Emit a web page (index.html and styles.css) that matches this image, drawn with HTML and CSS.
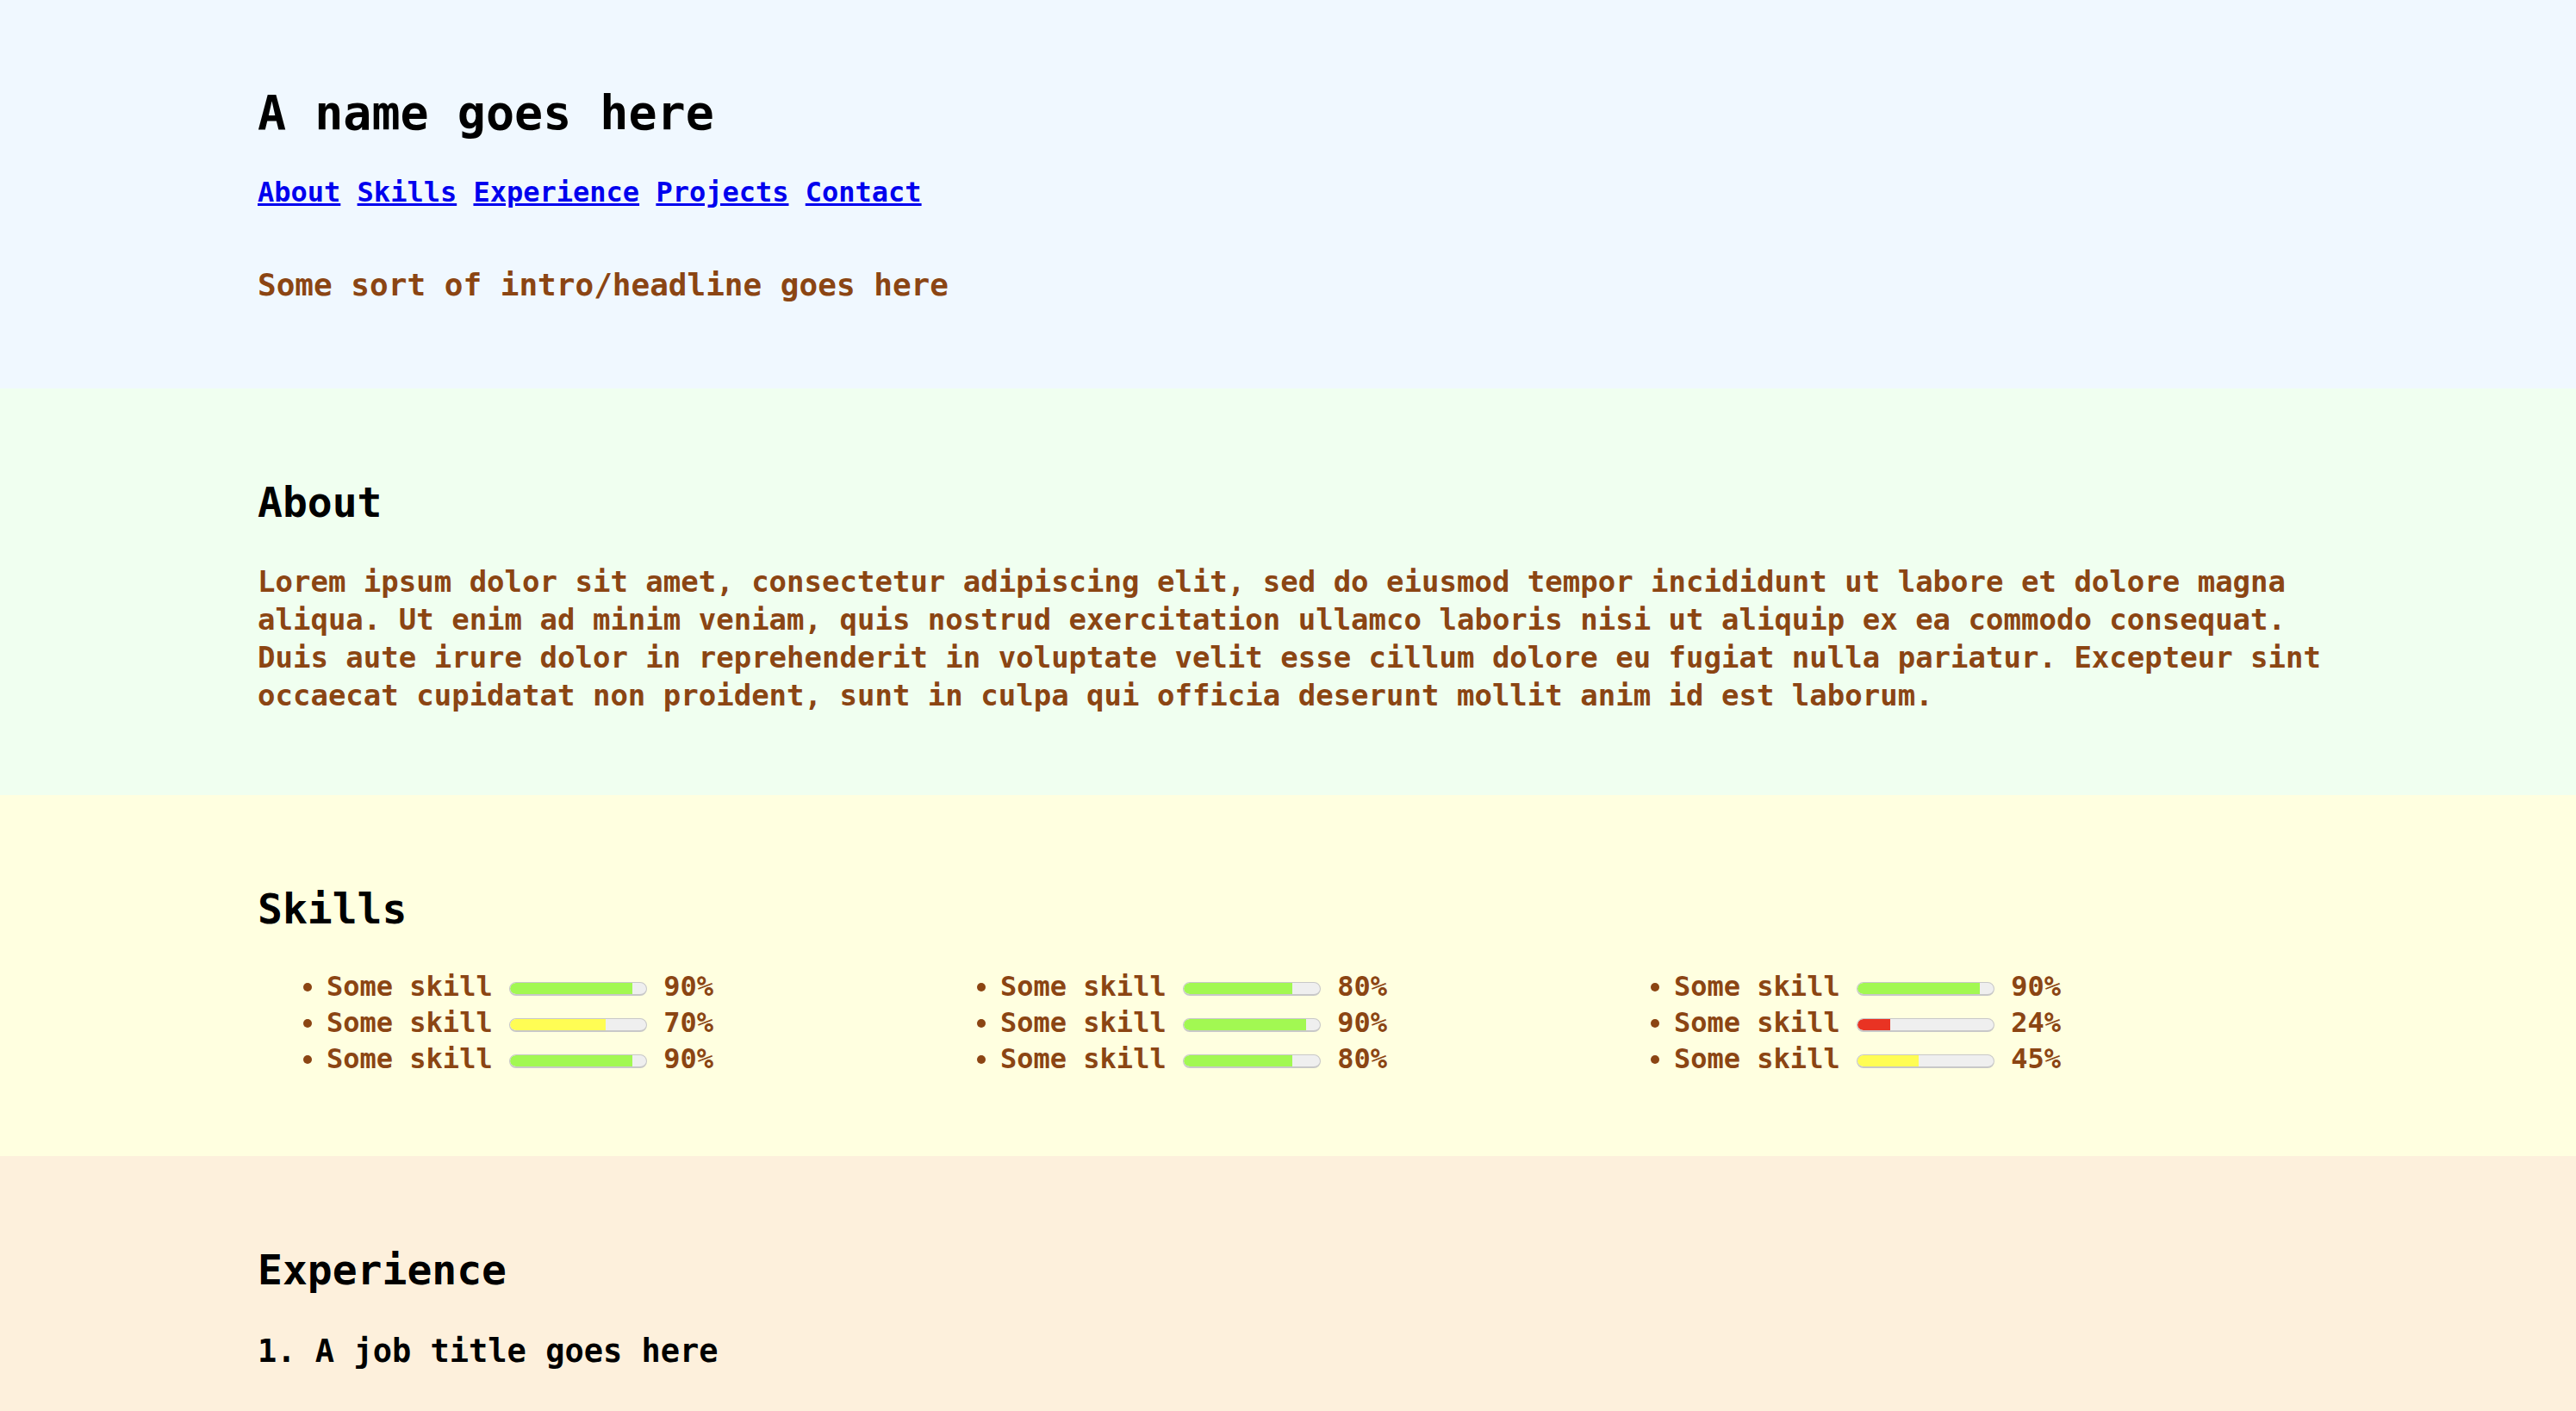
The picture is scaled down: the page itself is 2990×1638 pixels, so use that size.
FILE: index.html
```html
<!DOCTYPE html>
<html lang="en">
<head>
<meta charset="utf-8">
<title>A name goes here</title>
<link rel="stylesheet" href="styles.css">
</head>
<body>
<header class="header">
  <h1 class="name">A name goes here</h1>
  <nav class="nav">
    <a href="#about">About</a> <a href="#skills">Skills</a> <a href="#experience">Experience</a> <a href="#projects">Projects</a> <a href="#contact">Contact</a>
  </nav>
  <p class="intro">Some sort of intro/headline goes here</p>
</header>

<section class="section about" id="about">
  <h2 class="section-title">About</h2>
  <p class="text">Lorem ipsum dolor sit amet, consectetur adipiscing elit, sed do eiusmod tempor incididunt ut labore et dolore magna aliqua. Ut enim ad minim veniam, quis nostrud exercitation ullamco laboris nisi ut aliquip ex ea commodo consequat. Duis aute irure dolor in reprehenderit in voluptate velit esse cillum dolore eu fugiat nulla pariatur. Excepteur sint occaecat cupidatat non proident, sunt in culpa qui officia deserunt mollit anim id est laborum.</p>
</section>

<section class="section skills" id="skills">
  <h2 class="section-title">Skills</h2>
  <div class="skill-grid">
    <ul class="skill-list">
      <li>Some skill <meter min="0" max="100" low="30" high="75" optimum="100" value="90"></meter> 90%</li>
      <li>Some skill <meter min="0" max="100" low="30" high="75" optimum="100" value="70"></meter> 70%</li>
      <li>Some skill <meter min="0" max="100" low="30" high="75" optimum="100" value="90"></meter> 90%</li>
    </ul>
    <ul class="skill-list">
      <li>Some skill <meter min="0" max="100" low="30" high="75" optimum="100" value="80"></meter> 80%</li>
      <li>Some skill <meter min="0" max="100" low="30" high="75" optimum="100" value="90"></meter> 90%</li>
      <li>Some skill <meter min="0" max="100" low="30" high="75" optimum="100" value="80"></meter> 80%</li>
    </ul>
    <ul class="skill-list">
      <li>Some skill <meter min="0" max="100" low="30" high="75" optimum="100" value="90"></meter> 90%</li>
      <li>Some skill <meter min="0" max="100" low="30" high="75" optimum="100" value="24"></meter> 24%</li>
      <li>Some skill <meter min="0" max="100" low="30" high="75" optimum="100" value="45"></meter> 45%</li>
    </ul>
  </div>
</section>

<section class="section experience" id="experience">
  <h2 class="section-title">Experience</h2>
  <h3 class="job-title">1. A job title goes here</h3>
</section>
</body>
</html>
```

FILE: styles.css
```css
body {
  margin: 0;
  font-family: "DejaVu Sans Mono", "Liberation Mono", monospace;
  font-weight: bold;
  color: #000;
}

.header {
  background: #f0f8ff;
  padding: 99px 9% 96px 10%;
}

.name {
  margin: 0 0 38px;
  font-size: 55px;
  line-height: 64px;
}

.nav {
  font-size: 32px;
  line-height: 44px;
}

.nav a {
  color: #0000ee;
}

.intro {
  margin: 62px 0 0;
  font-size: 36px;
  line-height: 48px;
  color: #8b4513;
}

.section {
  padding: 104px 9% 94px 10%;
}

.about {
  background: #f0fff0;
}

.skills {
  background: #ffffe0;
  padding-bottom: 92px;
}

.experience {
  background: #fdf0dc;
  padding-bottom: 120px;
}

.section-title {
  margin: 0 0 42px;
  font-size: 48px;
  line-height: 56px;
}

.skills .section-title {
  margin-bottom: 41px;
}

.text {
  margin: 0;
  font-size: 34px;
  line-height: 44px;
  color: #8b4513;
}

.skill-grid {
  display: grid;
  grid-template-columns: repeat(3, 782px);
}

.skill-list {
  margin: 0;
  padding-left: 80px;
  font-size: 32px;
  line-height: 42px;
  color: #8b4513;
}

.skill-list meter {
  -webkit-appearance: none;
  appearance: none;
  width: 160px;
  height: 16px;
  vertical-align: baseline;
}

.skill-list meter::-webkit-meter-bar {
  box-sizing: border-box;
  height: 16px;
  background: #efefef;
  border: 1px solid #c8c8c8;
  border-bottom-width: 2px;
  border-radius: 8px;
}

.skill-list meter::-webkit-meter-optimum-value {
  background: #a2f852;
  border-radius: 7px 0 0 7px;
}

.skill-list meter::-webkit-meter-suboptimum-value {
  background: #fffd54;
  border-radius: 7px 0 0 7px;
}

.skill-list meter::-webkit-meter-even-less-good-value {
  background: #e93323;
  border-radius: 7px 0 0 7px;
}

.job-title {
  margin: 43px 0 0;
  font-size: 37px;
  line-height: 48px;
}
```
